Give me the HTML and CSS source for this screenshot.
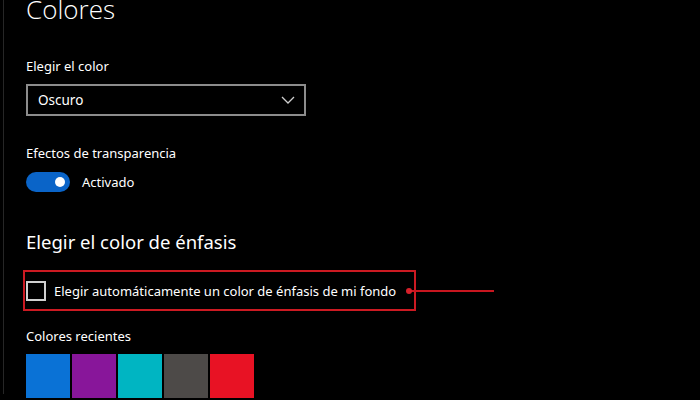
FILE: index.html
```html
<!DOCTYPE html>
<html lang="es">
<head>
    <meta charset="UTF-8">
    <title>Colores</title>
    <link rel="stylesheet" href="styles.css">
</head>
<body>
    <div class="panel">
        <h1 class="titulo">Colores</h1>

        <div class="grupo">
            <div class="etiqueta">Elegir el color</div>
            <div class="desplegable">
                <span>Oscuro</span>
                <svg class="chevron" width="14" height="8" viewBox="0 0 14 8">
                    <path d="M1 1 L7 7 L13 1" fill="none" stroke="#cfcfcf" stroke-width="1.3"/>
                </svg>
            </div>
        </div>

        <div class="grupo transparencia">
            <div class="etiqueta">Efectos de transparencia</div>
            <div class="interruptor-fila">
                <div class="interruptor"><span class="perilla"></span></div>
                <span>Activado</span>
            </div>
        </div>

        <h2 class="subtitulo">Elegir el color de énfasis</h2>

        <div class="resaltado-fila">
            <div class="resaltado">
                <span class="casilla"></span>
                <span>Elegir automáticamente un color de énfasis de mi fondo</span>
            </div>
            <div class="flecha"></div>
        </div>

        <div class="etiqueta recientes">Colores recientes</div>
        <div class="muestras">
            <div class="muestra azul"></div>
            <div class="muestra morado"></div>
            <div class="muestra turquesa"></div>
            <div class="muestra gris"></div>
            <div class="muestra rojo"></div>
        </div>
    </div>
</body>
</html>
```

FILE: styles.css
```css
/* Reset */
* {
    margin: 0;
    padding: 0;
    box-sizing: border-box;
}

body {
    background-color: #000;
    color: #fff;
    font-family: 'Noto Sans', sans-serif;
    font-size: 13px;
    height: 400px;
    overflow: hidden;
    padding-left: 3px;
}

.panel {
    border-left: 1px solid #262626;
    height: 100%;
    padding-left: 22px;
}

.titulo {
    font-family: 'Open Sans', sans-serif;
    font-weight: 300;
    font-size: 26px;
    line-height: 30px;
    margin-top: -6px;
    margin-bottom: 32px;
}

.etiqueta {
    line-height: 20px;
}

.desplegable {
    width: 280px;
    height: 32px;
    margin-top: 8px;
    border: 2px solid #8c8c8c;
    display: flex;
    align-items: center;
    justify-content: space-between;
    padding: 0 9px 0 10px;
    font-size: 13.5px;
}

.transparencia {
    margin-top: 27px;
}

.interruptor-fila {
    display: flex;
    align-items: center;
    gap: 12px;
    margin-top: 9px;
}

.interruptor {
    width: 44px;
    height: 20px;
    border-radius: 10px;
    background-color: #0a64c8;
    display: flex;
    align-items: center;
    justify-content: flex-end;
    padding-right: 5px;
}

.perilla {
    width: 10px;
    height: 10px;
    border-radius: 50%;
    background-color: #fff;
}

.subtitulo {
    font-weight: 400;
    font-size: 18.5px;
    line-height: 26px;
    margin-top: 37px;
}

.resaltado-fila {
    display: flex;
    align-items: center;
    margin-top: 15px;
    margin-left: -3px;
}

.resaltado {
    width: 393px;
    height: 41px;
    border: 2px solid #cc1a22;
    display: flex;
    align-items: center;
    gap: 8px;
    padding-left: 1px;
    white-space: nowrap;
}

.casilla {
    width: 20px;
    height: 20px;
    border: 2px solid #d0d0d0;
}

.flecha {
    width: 86px;
    height: 2px;
    background-color: #c8161f;
    margin-left: -8px;
    position: relative;
}

.flecha::before {
    content: "";
    position: absolute;
    left: -2px;
    top: -2px;
    width: 6px;
    height: 6px;
    border-radius: 50%;
    background-color: #d8202a;
}

.recientes {
    margin-top: 15px;
}

.muestras {
    display: flex;
    gap: 2px;
    margin-top: 8px;
}

.muestra {
    width: 44px;
    height: 44px;
}

.azul { background-color: #0a72d6; }
.morado { background-color: #88169a; }
.turquesa { background-color: #00b5c2; }
.gris { background-color: #4d4a48; }
.rojo { background-color: #e81224; }
```
